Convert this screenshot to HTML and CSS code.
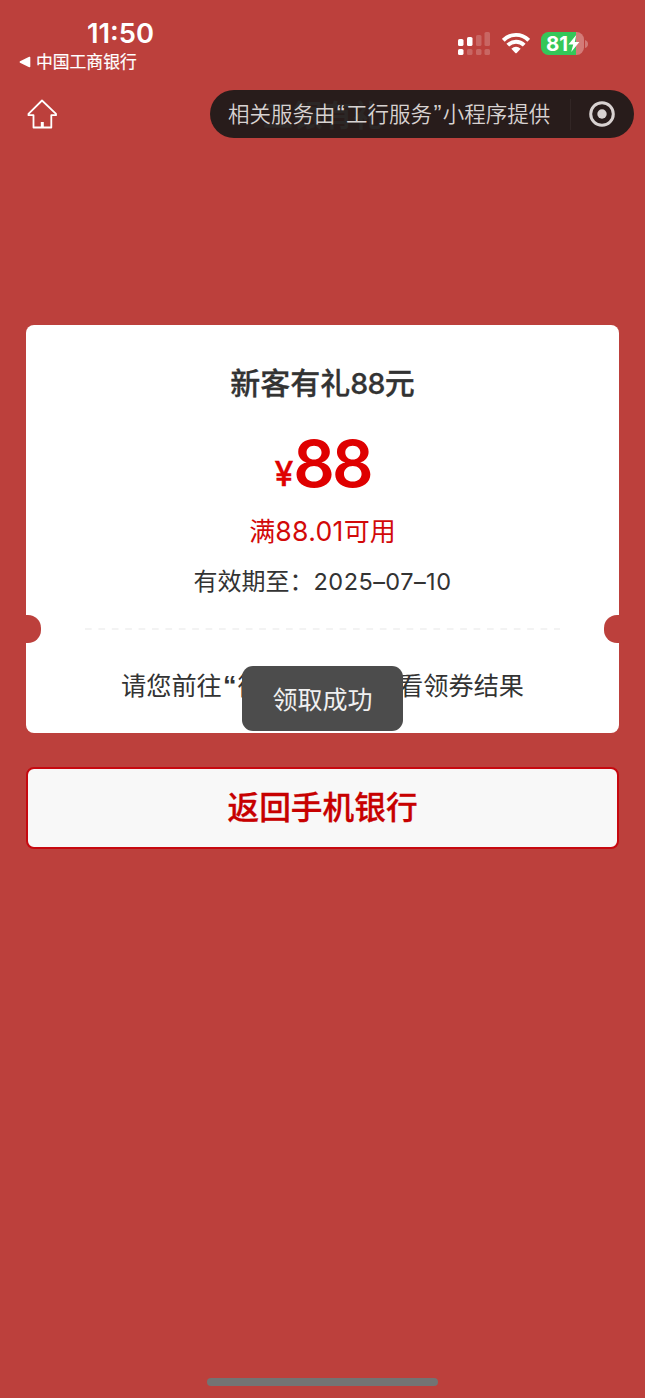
FILE: index.html
```html
<!DOCTYPE html>
<html lang="zh-CN">
<head>
<meta charset="utf-8">
<title>工银有礼</title>
<link rel="stylesheet" href="styles.css">
</head>
<body>
<div class="screen">
  <header class="status">
    <div class="status-left">
      <div class="time">11:50</div>
      <div class="back-app">
        <svg width="12" height="12" viewBox="0 0 12 12"><path d="M1 5.2 10.2.7Q11.3.4 11.3 1.4V10.6Q11.3 11.6 10.2 11.3L1 6.8Q0 6 1 5.2Z" fill="#fff"/></svg>
        <span>中国工商银行</span>
      </div>
    </div>
    <div class="status-right">
      <svg class="signal" width="33" height="24" viewBox="0 0 33 24" fill="#fff">
        <rect x="1" y="7" width="5.5" height="7" rx="1.6"/>
        <rect x="10" y="5" width="5.5" height="9" rx="1.6"/>
        <rect x="1" y="17" width="5.5" height="6" rx="1.6"/>
        <g opacity=".2">
          <rect x="19" y="3" width="5.5" height="11" rx="1.6"/>
          <rect x="27.5" y="0" width="5.5" height="14" rx="1.6"/>
          <rect x="10" y="17" width="5.5" height="6" rx="1.6"/>
          <rect x="19" y="17" width="5.5" height="6" rx="1.6"/>
          <rect x="27.5" y="17" width="5.5" height="6" rx="1.6"/>
        </g>
      </svg>
      <svg class="wifi" width="28" height="22" viewBox="0 0 28 22">
        <g fill="none" stroke="#fff" stroke-width="3.9">
          <path d="M1.3 8.3C8.3 1.1 19.7 1.1 26.7 8.3"/>
          <path d="M5.8 13.2C10.4 8.6 17.6 8.6 22.2 13.2"/>
        </g>
        <path d="M9.3 16.8Q14 12.6 18.7 16.8L14.7 21Q14 21.6 13.3 21Z" fill="#fff"/>
      </svg>
      <div class="battery">
        <span class="battery-level">81</span>
        <svg class="bolt" width="12" height="17" viewBox="0 0 12 17"><path d="M8.2 0 .4 9.5H5.2L3.2 17 11.4 7H6.8Z" fill="#fff"/></svg>
      </div>
      <svg class="battery-tip" width="3" height="8" viewBox="0 0 3 8"><path d="M0 0Q3 1 3 4T0 8Z" fill="#fff" opacity=".3"/></svg>
    </div>
  </header>

  <nav class="nav">
    <svg class="home" width="32" height="32" viewBox="0 0 32 32" fill="none" stroke="#fff" stroke-width="1.8" stroke-linejoin="round" stroke-linecap="round">
      <path d="M16 2.5 2.5 15.8V17.2H7.5V29.5H25.3V17.2H30V15.8Z"/>
      <path d="M16.3 24V29" stroke-width="3" stroke-linecap="butt"/>
    </svg>
    <div class="capsule">
      <span class="nav-title">工银有礼</span>
      <span class="provider">相关服务由<span class="q">“</span>工行服务<span class="q">”</span>小程序提供</span>
      <i class="divider"></i>
      <svg class="target" width="28" height="28" viewBox="0 0 28 28"><circle cx="14" cy="14" r="11.3" fill="none" stroke="#d8d2d1" stroke-width="3"/><circle cx="14" cy="14" r="4.7" fill="#d8d2d1"/></svg>
    </div>
  </nav>

  <main class="content">
    <section class="ticket">
      <h1 class="name">新客有礼<span class="name-num">88</span>元</h1>
      <div class="amount"><span class="yen">¥</span><span class="value">88</span></div>
      <div class="limit">满<span class="limit-num">88.01</span>可用</div>
      <div class="expiry">有效期至：<span class="date">2025–07–10</span></div>
      <div class="tear">
        <i class="notch"></i>
        <svg class="dashes" width="475" height="2" viewBox="0 0 475 2"><path d="M0 1H475" stroke="#efefef" stroke-width="1.4" stroke-dasharray="6.7 6.7"/></svg>
        <i class="notch notch-right"></i>
      </div>
      <div class="hint"><span>请您前往<b class="open-quote">“</b>微</span><span>看领券结果</span></div>
      <div class="toast">领取成功</div>
    </section>
    <button class="back">返回手机银行</button>
  </main>
  <div class="home-indicator"></div>
</div>
</body>
</html>
```
FILE: styles.css
```css
* { box-sizing: border-box; }
body {
  margin: 0;
  background: #bc403c;
  font-family: "Inter", "Noto Sans CJK SC", sans-serif;
  color: #333;
}
.screen {
  width: 645px;
  height: 1398px;
  display: flex;
  flex-direction: column;
  overflow: hidden;
}
.status {
  height: 90px;
  display: flex;
  justify-content: space-between;
  color: #fff;
}
.status-left { padding: 18px 0 0 19px; }
.time {
  padding-left: 68px;
  font-size: 27.3px;
  line-height: 31px;
  height: 30px;
  font-weight: 600;
  white-space: nowrap;
}
.back-app {
  display: flex;
  align-items: center;
  gap: 5px;
  height: 28px;
  font: 400 16.8px/28px "Noto Sans CJK SC", sans-serif;
  -webkit-text-stroke: 0.2px #fff;
}
.back-app span { position: relative; top: -1px; }
.status-right {
  display: flex;
  align-items: flex-start;
  padding: 32px 57px 0 0;
}
.wifi { margin: 0 0 0 12px; }
.battery {
  display: flex;
  align-items: center;
  width: 43px;
  height: 23px;
  margin-left: 11px;
  padding-left: 5px;
  border-radius: 7.5px;
  background: linear-gradient(90deg, #34c759 35px, #d37b78 35px);
}
.battery-level {
  font-size: 20.5px;
  line-height: 23px;
  font-weight: 700;
}
.bolt { flex: none; }
.battery-tip { margin: 8px 0 0 1px; }
.nav {
  height: 48px;
  display: flex;
  align-items: center;
  justify-content: space-between;
  padding: 0 11px 0 26px;
}
.capsule {
  position: relative;
  width: 424px;
  height: 48px;
  display: flex;
  align-items: center;
  padding-left: 18px;
  border-radius: 24px;
  background: #281c1b;
}
.nav-title {
  position: absolute;
  left: 53px;
  top: 2px;
  font: 700 30px/42px "Noto Sans CJK SC", sans-serif;
  color: #2b2726;
}
.provider {
  position: relative;
  width: 342px;
  font: 350 21.5px/47px "Inter", "Noto Sans CJK SC", sans-serif;
  color: #d8d2d1;
  white-space: nowrap;
}
.q {
  display: inline-block;
  width: 10.6px;
  text-align: center;
  font-family: "Liberation Sans", sans-serif;
  font-size: 24px;
  line-height: 30px;
}
.divider { width: 1px; height: 31px; background: #322625; }
.target { margin-left: 17px; }
.content {
  padding: 187px 26px 0;
}
.ticket {
  position: relative;
  height: 408px;
  padding-top: 35px;
  border-radius: 8px;
  background: #fff;
  text-align: center;
  white-space: nowrap;
}
.name {
  margin: 0;
  font-size: 30px;
  line-height: 46px;
  font-weight: 500;
  -webkit-text-stroke: 0.3px #333;
}
.name-num { font-size: 28.5px; letter-spacing: -0.8px; }
.amount {
  height: 96px;
  line-height: 96px;
  padding-top: 9px;
  font-weight: 600;
  color: #df0000;
}
.yen {
  display: inline-block;
  font-size: 34px;
  line-height: 40px;
  position: relative;
  top: -1px;
  font-weight: 500;
  -webkit-text-stroke: 0.3px #df0000;
}
.value { font-size: 65px; letter-spacing: -3px; }
.limit {
  height: 58px;
  font-size: 26px;
  line-height: 56px;
  color: #d20909;
}
.limit-num { font-size: 26.6px; letter-spacing: 0.3px; }
.expiry {
  height: 44px;
  font-size: 24px;
  line-height: 42px;
}
.date { font-size: 23.5px; letter-spacing: 0.45px; }
.tear {
  display: flex;
  align-items: center;
  justify-content: space-between;
  height: 28px;
  margin-top: 10px;
}
.notch {
  width: 15px;
  height: 28px;
  background: #bc403c;
  border-radius: 0 13px 13px 0;
}
.notch-right { border-radius: 13px 0 0 13px; }
.hint {
  display: flex;
  justify-content: space-between;
  padding: 24px 95px 0;
  font-size: 25.2px;
  line-height: 38px;
}
.open-quote {
  display: inline-block;
  width: 16px;
  text-align: center;
  font-family: "Liberation Sans", sans-serif;
  font-weight: 700;
  font-size: 27px;
  line-height: 30px;
}
.toast {
  position: absolute;
  left: 216px;
  top: 341px;
  width: 161px;
  height: 65px;
  border-radius: 11px;
  background: #4c4c4c;
  color: #f0f0f0;
  font-size: 25px;
  line-height: 68px;
}
.back {
  display: block;
  width: 100%;
  height: 82px;
  margin-top: 34px;
  padding: 0 0 6px;
  border: 2px solid #c7080f;
  border-radius: 8px;
  background: #f8f8f8;
  color: #c70000;
  font: 500 31.7px/72px "Noto Sans CJK SC", sans-serif;
  -webkit-text-stroke: 0.3px #c70000;
}
.home-indicator {
  width: 231px;
  height: 8px;
  margin: auto auto 12px;
  border-radius: 4px;
  background: #737373;
}
```
